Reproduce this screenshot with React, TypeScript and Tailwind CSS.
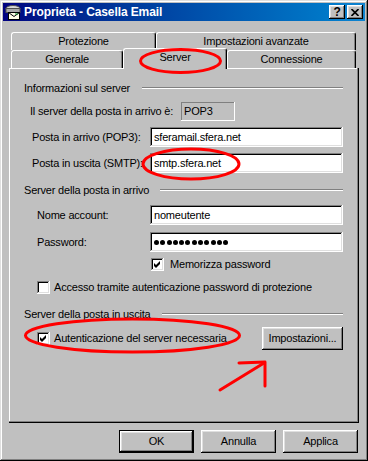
import React from "react";

const raised =
  "shadow-[inset_-1px_-1px_#000,inset_1px_1px_#fff,inset_-2px_-2px_#808080,inset_2px_2px_#dfdfdf]";
const sunken =
  "shadow-[inset_-1px_-1px_#fff,inset_1px_1px_#808080,inset_-2px_-2px_#dfdfdf,inset_2px_2px_#000]";

const MailIcon = () => (
  <svg width="16" height="16" viewBox="0 0 16 16">
    <ellipse cx="8" cy="4.5" rx="7" ry="3" fill="#d8d8d8" stroke="#505050" />
    <rect x="1" y="4.5" width="14" height="4" fill="#a8a8a8" stroke="#505050" />
    <rect x="3.5" y="8.5" width="11" height="7" fill="#ffffe8" stroke="#000" />
    <path d="M3.5 8.5 L9 12.5 L14.5 8.5" fill="none" stroke="#000" />
    <path d="M10 10 h3" stroke="#0a8a2a" />
  </svg>
);

const TitleBar = () => (
  <div className="h-[18px] flex items-center bg-gradient-to-r from-[#000080] to-[#1084d0] pl-[2px] pr-[2px]">
    <MailIcon />
    <span className="ml-[3px] text-white font-bold text-[12px] tracking-[-0.1px]">
      Proprieta - Casella Email
    </span>
    <div className="ml-auto flex gap-[2px]">
      <div
        className={`w-[16px] h-[14px] bg-[#c0c0c0] ${raised} flex items-center justify-center font-bold text-[12px] leading-none`}
      >
        ?
      </div>
      <div
        className={`w-[16px] h-[14px] bg-[#c0c0c0] ${raised} flex items-center justify-center`}
      >
        <svg width="8" height="7" viewBox="0 0 8 7">
          <path d="M0.5 0 L7.5 7 M7.5 0 L0.5 7" stroke="#000" strokeWidth="1.6" />
        </svg>
      </div>
    </div>
  </div>
);

const tab =
  "h-[18px] flex items-center justify-center border-t border-l border-white border-r border-r-black rounded-t-[3px] shadow-[inset_-1px_0_#808080] bg-[#c0c0c0]";

const Tabs = () => (
  <div className="pl-[2px]">
    <div className="flex">
      <div className={`${tab} w-[145px]`}>Protezione</div>
      <div className={`${tab} w-[200px]`}>Impostazioni avanzate</div>
    </div>
    <div className="flex items-end">
      <div className={`${tab} w-[112px]`}>Generale</div>
      <div className={`${tab} w-[104px] h-[21px] -mt-[2px] -mb-[1px] relative z-10 pb-[3px]`}>Server</div>
      <div className={`${tab} w-[129px]`}>Connessione</div>
    </div>
  </div>
);

const Check = ({ on }: { on?: boolean }) => (
  <div className={`w-[13px] h-[13px] shrink-0 bg-white ${sunken} flex items-center justify-center`}>
    {on && (
      <svg width="13" height="13" viewBox="0 0 13 13">
        <path d="M3 5 L5 7 L9 3 L9 6 L5 10 L3 8 Z" fill="#000" />
      </svg>
    )}
  </div>
);

const Field = ({ children }: { children: React.ReactNode }) => (
  <div className={`w-[193px] h-[20px] bg-white ${sunken} flex items-center pl-[4px]`}>
    {children}
  </div>
);

const Header = ({ label, line, cls }: { label: string; line: number; cls: string }) => (
  <div className={`h-[14px] flex items-center justify-between pl-[15px] pr-[16px] ${cls}`}>
    <span>{label}</span>
    <div
      className="h-0 border-t border-t-[#808080] border-b border-b-white"
      style={{ width: line }}
    />
  </div>
);

const Panel = () => (
  <div className="h-[355px] pt-[13px] shadow-[inset_-1px_-1px_#000,inset_-2px_-2px_#808080,inset_1px_1px_#fff]">
    <Header label="Informazioni sul server" line={201} cls="" />
    <div className="mt-[7px] h-[19px] flex items-center pl-[21px]">
      <span className="w-[151px]">Il server della posta in arrivo è:</span>
      <div className="w-[54px] h-[19px] flex items-center pl-[3px] shadow-[inset_-1px_-1px_#fff,inset_1px_1px_#808080]">
        POP3
      </div>
    </div>
    <div className="mt-[6px] h-[20px] flex items-center pl-[23px]">
      <span className="w-[118px]">Posta in arrivo (POP3):</span>
      <Field>sferamail.sfera.net</Field>
    </div>
    <div className="mt-[6px] h-[20px] flex items-center pl-[23px]">
      <span className="w-[118px]">Posta in uscita (SMTP):</span>
      <Field>smtp.sfera.net</Field>
    </div>
    <Header label="Server della posta in arrivo" line={183} cls="mt-[10px]" />
    <div className="mt-[8px] h-[20px] flex items-center pl-[28px]">
      <span className="w-[113px]">Nome account:</span>
      <Field>nomeutente</Field>
    </div>
    <div className="mt-[7px] h-[20px] flex items-center pl-[28px]">
      <span className="w-[113px]">Password:</span>
      <Field>
        <div className="flex gap-[1.3px]">
          {Array.from({ length: 12 }).map((_, i) => (
            <div key={i} className="w-[5px] h-[5px] rounded-full bg-black" />
          ))}
        </div>
      </Field>
    </div>
    <div className="mt-[6px] h-[13px] flex items-center gap-[6px] pl-[142px]">
      <Check on />
      <span>Memorizza password</span>
    </div>
    <div className="mt-[10px] h-[13px] flex items-center gap-[4px] pl-[28px]">
      <Check />
      <span>Accesso tramite autenticazione password di protezione</span>
    </div>
    <Header label="Server della posta in uscita" line={181} cls="mt-[13px]" />
    <div className="mt-[6px] h-[23px] flex items-center pl-[28px] pr-[16px]">
      <Check on />
      <span className="ml-[4px]">Autenticazione del server necessaria</span>
      <div className={`ml-auto w-[81px] h-[23px] ${raised} flex items-center justify-center`}>
        Impostazioni...
      </div>
    </div>
  </div>
);

const Btn = ({ label, def }: { label: string; def?: boolean }) => (
  <div
    className={`w-[75px] h-[23px] flex items-center justify-center ${
      def
        ? "shadow-[inset_0_0_0_1px_#000,inset_-2px_-2px_#000,inset_2px_2px_#fff,inset_-3px_-3px_#808080,inset_3px_3px_#dfdfdf]"
        : raised
    }`}
  >
    {label}
  </div>
);

const Annotations = () => (
  <svg
    className="absolute inset-0 z-20 pointer-events-none"
    width="368"
    height="461"
    viewBox="0 0 368 461"
  >
    <g fill="none" stroke="#ff0000" strokeWidth="3" strokeLinecap="round" strokeLinejoin="round">
      <ellipse cx="180.5" cy="61" rx="40" ry="11.5" />
      <ellipse cx="191" cy="164" rx="48" ry="15" />
      <ellipse cx="132.5" cy="335.5" rx="107" ry="16.5" />
      <path d="M220 390 L264 363" />
      <path d="M239 363 L265 362 L265 386" />
    </g>
  </svg>
);

export default function App() {
  return (
    <div className="relative w-[368px] h-[461px] bg-[#c0c0c0] p-[3px] font-[family-name:Liberation_Sans,Arial,sans-serif] text-[11px] tracking-[-0.2px] text-black shadow-[inset_-1px_-1px_#000,inset_1px_1px_#dfdfdf,inset_-2px_-2px_#808080,inset_2px_2px_#fff]">
      <TitleBar />
      <div className="mt-[11px] px-[6px]">
        <Tabs />
        <Panel />
        <div className="mt-[7px] flex justify-end gap-[7px] pr-[1px]">
          <Btn label="OK" def />
          <Btn label="Annulla" />
          <Btn label="Applica" />
        </div>
      </div>
      <Annotations />
    </div>
  );
}
